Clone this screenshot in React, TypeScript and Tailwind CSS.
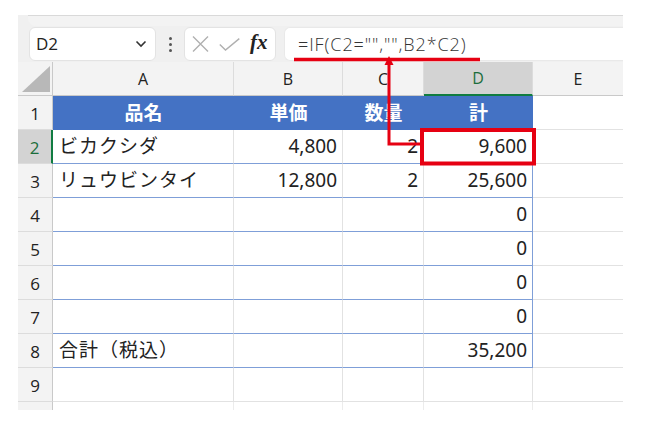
import React from 'react';

const cols = ['A', 'B', 'C', 'D', 'E'];

// 表のデータ（行1〜9）
const rows: { a?: string; b?: string; c?: string; d?: string }[] = [
  { a: '品名', b: '単価', c: '数量', d: '計' },
  { a: 'ビカクシダ', b: '4,800', c: '2', d: '9,600' },
  { a: 'リュウビンタイ', b: '12,800', c: '2', d: '25,600' },
  { d: '0' },
  { d: '0' },
  { d: '0' },
  { d: '0' },
  { a: '合計（税込）', d: '35,200' },
  {},
];

const ui = 'font-["Open_Sans","Liberation_Sans",sans-serif]';
const cellFont = 'font-["Noto_Sans","Noto_Sans_CJK_JP",sans-serif]';

function ColHeader({ label, selected, last }: { label: string; selected?: boolean; last?: boolean }) {
  return (
    <div
      className={
        'h-[34px] flex items-center justify-center text-[16px] ' +
        (selected
          ? 'bg-[#d3d3d3] text-[#1b6e3c] border-b-2 border-b-[#107c41] '
          : 'bg-[#f3f3f3] text-[#222] border-b border-b-[#c9c9c9] ') +
        (last ? '' : 'border-r border-r-[#dcdcdc]')
      }
    >
      {label}
    </div>
  );
}

function RowHeader({ n, selected }: { n: number | string; selected?: boolean }) {
  return (
    <div
      className={
        'flex items-center justify-center text-[17px] pt-[3px] border-b border-b-[#dcdcdc] ' +
        (selected
          ? 'bg-[#d3d3d3] text-[#1b6e3c] border-r-2 border-r-[#107c41]'
          : 'bg-[#f3f3f3] text-[#222] border-r border-r-[#c9c9c9]')
      }
    >
      {n}
    </div>
  );
}

export default function App() {
  return (
    <div className="relative w-[663px] h-[425px] bg-white overflow-hidden">
      <div className={'ml-[18px] mt-[15px] w-[605px] bg-[#f0f0f0] ' + ui}>
        {/* ribbon bottom edge */}
        <div className="h-[11px] ml-[10px] rounded-bl-[8px] border-t border-[#d9d9d9] bg-[#f3f3f3]" />

        {/* formula bar */}
        <div className="h-[36px] flex items-center pl-[11px]">
          <div className="w-[127px] h-[34px] bg-white rounded-[6px] border border-[#e3e3e3] flex items-center pl-[6px] pr-[8px]">
            <span className="text-[17px] text-[#222] flex-1">D2</span>
            <svg width="12" height="8" viewBox="0 0 12 8">
              <path d="M1.5 1.5 L6 6 L10.5 1.5" fill="none" stroke="#333" strokeWidth="1.6" />
            </svg>
          </div>
          <div className="w-[28px] flex flex-col items-center gap-[3px]">
            <span className="w-[3px] h-[3px] rounded-full bg-[#555]" />
            <span className="w-[3px] h-[3px] rounded-full bg-[#555]" />
            <span className="w-[3px] h-[3px] rounded-full bg-[#555]" />
          </div>
          <div className="w-[92px] h-[34px] bg-white rounded-[6px] border border-[#e3e3e3] flex items-center pl-[7px] gap-[10px]">
            <svg width="17" height="16" viewBox="0 0 17 16">
              <path d="M1 0.5 L16 15.5 M16 0.5 L1 15.5" stroke="#b0b0b0" strokeWidth="1.4" />
            </svg>
            <svg width="21" height="13" viewBox="0 0 21 13">
              <path d="M0.8 6.5 L6.5 12 L20.3 0.6" fill="none" stroke="#b0b0b0" strokeWidth="1.4" />
            </svg>
            <span className='font-["Liberation_Serif",serif] italic font-bold text-[21px] leading-none text-[#222] -mt-[3px]'>fx</span>
          </div>
          <div className="flex-1 ml-[8px] h-[34px] bg-white rounded-l-[6px] border-l border-y border-[#e9e9e9] flex items-center pl-[13px] text-[18px] tracking-[0.9px] text-[#333] font-light">
            =IF(C2="","",B2*C2)
          </div>
        </div>

        {/* sheet grid */}
        <div className="grid grid-cols-[35px_181px_109px_81px_109px_90px] auto-rows-[34px]">
          <div className="relative bg-[#f3f3f3] border-r border-r-[#c9c9c9] border-b border-b-[#c9c9c9]">
            <div className="absolute right-[2px] bottom-[3px] w-0 h-0 border-l-[28px] border-l-transparent border-b-[26px] border-b-[#b8b8b8]" />
          </div>
          {cols.map((c, i) => (
            <ColHeader key={c} label={c} selected={c === 'D'} last={i === cols.length - 1} />
          ))}

          {rows.map((r, i) => {
            const n = i + 1;
            const header = n === 1;
            const body = n >= 2 && n <= 8;
            const base = 'flex items-center text-[19px] ' + cellFont + ' ';
            const bodyCell = (right: boolean, last?: boolean) =>
              base +
              'bg-white text-[#222] border-b border-b-[#7f9fd8] ' +
              (last ? 'border-r border-r-[#7f9fd8] ' : 'border-r border-r-[#e2e2e2] ') +
              (right ? 'justify-end pr-[5px]' : 'pl-[6px] tracking-[1px]');
            const headCell =
              base + 'bg-[#4472c4] text-white font-bold justify-center text-[18px]';
            const plain = (last?: boolean) =>
              base + 'bg-white border-b border-b-[#e2e2e2] ' + (last ? '' : 'border-r border-r-[#e2e2e2]');
            return (
              <React.Fragment key={n}>
                <RowHeader n={n} selected={n === 2} />
                {header ? (
                  <>
                    <div className={headCell}>{r.a}</div>
                    <div className={headCell}>{r.b}</div>
                    <div className={headCell}>{r.c}</div>
                    <div className={headCell}>{r.d}</div>
                  </>
                ) : body ? (
                  <>
                    <div className={bodyCell(false)}>{r.a}</div>
                    <div className={bodyCell(true)}>{r.b}</div>
                    <div className={bodyCell(true)}>{r.c}</div>
                    <div className={bodyCell(true, true)}>{r.d}</div>
                  </>
                ) : (
                  <>
                    <div className={plain()} />
                    <div className={plain()} />
                    <div className={plain()} />
                    <div className={plain()} />
                  </>
                )}
                <div className={plain(true)} />
              </React.Fragment>
            );
          })}
        </div>

        {/* partial row 10 */}
        <div className="grid grid-cols-[35px_181px_109px_81px_109px_90px] h-[8px] bg-white">
          <div className="bg-[#f3f3f3] border-r border-r-[#c9c9c9]" />
          <div className="border-r border-r-[#ececec]" />
          <div className="border-r border-r-[#ececec]" />
          <div className="border-r border-r-[#ececec]" />
          <div className="border-r border-r-[#ececec]" />
          <div />
        </div>
      </div>

      {/* red annotations */}
      <svg className="absolute inset-0 pointer-events-none" width="663" height="425" viewBox="0 0 663 425">
        <line x1="294" y1="59.5" x2="480" y2="59.5" stroke="#e60012" strokeWidth="3.5" />
        <polyline points="422,144 389,144 389,63" fill="none" stroke="#e60012" strokeWidth="3" />
        <polygon points="389,56 384.5,65 393.5,65" fill="#e60012" />
        <rect x="422" y="130" width="112" height="33.5" fill="none" stroke="#e60012" strokeWidth="4" />
      </svg>
    </div>
  );
}
